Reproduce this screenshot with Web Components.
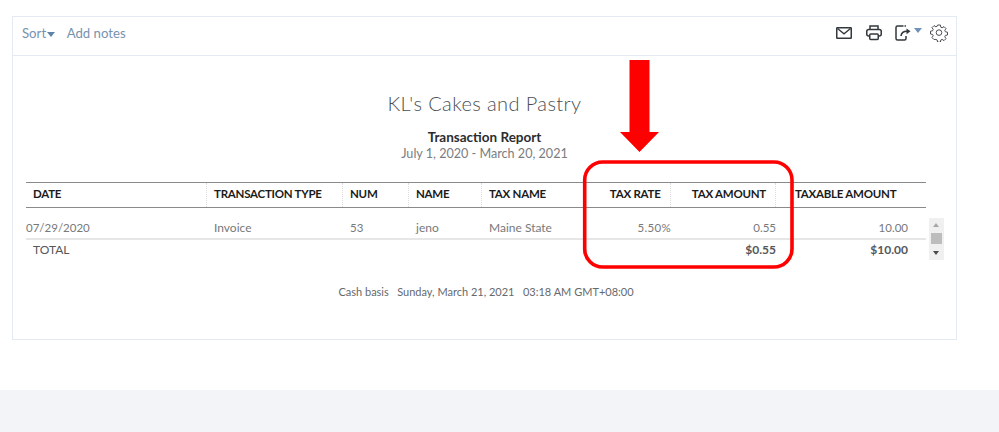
<!DOCTYPE html>
<html>
<head>
<meta charset="utf-8">
<title>Transaction Report</title>
<style>
  html, body { margin: 0; padding: 0; background: #fff; }
  body { width: 999px; height: 432px; overflow: hidden; font-family: Lato, "Open Sans", sans-serif; position: relative; }
</style>
</head>
<body>
<report-page>
  <report-panel>
    <report-toolbar slot="toolbar"></report-toolbar>
    <report-header company="KL's Cakes and Pastry" title="Transaction Report" range="July 1, 2020 - March 20, 2021"></report-header>
    <report-table></report-table>
    <report-footer>Cash basis&nbsp;&nbsp;&nbsp;Sunday, March 21, 2021&nbsp;&nbsp;&nbsp;03:18 AM GMT+08:00</report-footer>
  </report-panel>
</report-page>
<red-callout></red-callout>

<script>
class ReportPage extends HTMLElement {
  connectedCallback() {
    this.attachShadow({ mode: 'open' });
    this.shadowRoot.innerHTML = `
      <style>
        :host { display: flex; flex-direction: column; height: 432px; }
        .top { flex: none; height: 390px; padding: 16px 0 0 12px; box-sizing: border-box; }
        .band { flex: 1; background: #f3f4f8; }
      </style>
      <div class="top"><slot></slot></div>
      <div class="band"></div>`;
  }
}

class ReportPanel extends HTMLElement {
  connectedCallback() {
    this.attachShadow({ mode: 'open' });
    this.shadowRoot.innerHTML = `
      <style>
        :host { display: block; width: 945px; height: 324px; box-sizing: border-box; border: 1px solid #e4eaf4; }
        .body { padding: 0 13px; }
      </style>
      <slot name="toolbar"></slot>
      <div class="body"><slot></slot></div>`;
  }
}

class ReportToolbar extends HTMLElement {
  connectedCallback() {
    this.attachShadow({ mode: 'open' });
    this.shadowRoot.innerHTML = `
      <style>
        :host { display: flex; align-items: center; justify-content: space-between; height: 39px; box-sizing: border-box; border-bottom: 1px solid #e4eaf4; padding: 0 8px 6px 9px; font-size: 13.2px; color: #7792ae; }
        .left { display: flex; align-items: center; }
        .caret { width: 0; height: 0; border-left: 4px solid transparent; border-right: 4px solid transparent; border-top: 5px solid #5f83a8; margin: 2px 11.5px 0 1px; }
        .right { display: flex; align-items: center; }
        svg { display: block; fill: none; stroke: #33383d; stroke-width: 1.5; }
        .mail { margin-right: 14px; }
        .print { margin-right: 13px; }
        .caret2 { width: 0; height: 0; border-left: 4px solid transparent; border-right: 4px solid transparent; border-top: 5px solid #6f93b8; margin: -5px 8px 0 2px; }
      </style>
      <div class="left"><span>Sort</span><i class="caret"></i><span>Add notes</span></div>
      <div class="right">
        <svg class="mail" width="16" height="12" viewBox="0 0 16 12"><rect x=".75" y=".75" width="14.5" height="10.5" rx=".5"/><path d="M1.5 1.5 8 6.8l6.500-5.300" stroke-width="1.300"/></svg>
        <svg class="print" width="16" height="16" viewBox="0 0 16 16"><path d="M4 4.500V1h8v3.500"/><rect x=".75" y="4.500" width="14.500" height="6.500" rx="2"/><rect x="3.750" y="9" width="8.500" height="5.500" rx="1" fill="#fff"/></svg>
        <svg width="17" height="16" viewBox="0 0 17 16"><path d="M8.500 1H2.500A1.500 1.500 0 0 0 1 2.500v11A1.500 1.500 0 0 0 2.500 15h7A1.500 1.500 0 0 0 11 13.500V11"/><path d="M11 1H9.500" /><path d="M6 11c.4-3 2.500-4.800 6-4.800" stroke-width="1.600"/><path d="M11.500 3.500 15.500 6.300 11.500 9.200z" fill="#33383d" stroke="none"/></svg>
        <i class="caret2"></i>
        <svg width="18" height="18" viewBox="0 0 18 18" style="stroke:#4a4f54;stroke-width:1"><path d="M7.600 1h2.800l.4 2.200 1.300.6 1.900-1.200 2 2-1.200 1.800.6 1.400 2.100.4v2.800l-2.100.4-.6 1.400 1.200 1.800-2 2-1.900-1.200-1.300.6-.4 2.200H7.600l-.4-2.200-1.300-.6L4 15.600l-2-2 1.200-1.800-.6-1.400L.5 10V7.200l2.100-.4.600-1.400L2 3.600l2-2 1.900 1.200 1.300-.6z"/><circle cx="9" cy="8.600" r="2.800"/></svg>
      </div>`;
  }
}

class ReportHeader extends HTMLElement {
  connectedCallback() {
    this.attachShadow({ mode: 'open' });
    this.shadowRoot.innerHTML = `
      <style>
        :host { display: block; text-align: center; padding-top: 34px; height: 92px; box-sizing: content-box; }
        .co { font-size: 20px; line-height: 26px; font-weight: 300; color: #4a4f54; letter-spacing: .4px; }
        .ti { font-size: 13.5px; line-height: 16px; font-weight: 700; color: #2a2d30; margin-top: 13px; }
        .ra { font-size: 12.6px; line-height: 16px; color: #7a7d80; margin-top: 1px; }
      </style>
      <div class="co">${this.getAttribute('company')}</div>
      <div class="ti">${this.getAttribute('title')}</div>
      <div class="ra">${this.getAttribute('range')}</div>`;
  }
}

class ReportTable extends HTMLElement {
  connectedCallback() {
    this.attachShadow({ mode: 'open' });
    this.shadowRoot.innerHTML = `
      <style>
        :host { display: block; width: 900px; position: relative; font-size: 12px; }
        .row { display: grid; grid-template-columns: 181px 136px 66px 73px 103px 86px 105px 150px; }
        .head { height: 26px; box-sizing: border-box; border-top: 1px solid #8a8a8a; border-bottom: 1px solid #8a8a8a; font-weight: 700; font-size: 11.5px; color: #1b1b1b; align-items: center; line-height: 21px; letter-spacing: -.25px; }
        .head > div { padding-left: 7px; height: 24px; border-right: 1px dotted #dcdcdc; box-sizing: border-box; }
        .head > div:nth-child(5), .head > div:last-child { border-right: 0; }
        .head .r { text-align: right; padding: 0 9px 0 0; }
        .head .rate { padding-right: 9.5px; }
        .head .last { padding-left: 19px; }
        .data { height: 32px; box-sizing: border-box; border-bottom: 2px solid #e6e6e6; color: #77797b; padding-top: 12px; line-height: 16px; }
        .data .p { padding-left: 7px; }
        .r { text-align: right; }
        .n { font-size: 11.5px; }
        .pct { letter-spacing: .3px; }
        .data .end, .total .end { padding-right: 18px; }
        .total { height: 21px; color: #55575a; line-height: 20px; }
        .total b { color: #55575a; font-size: 12px; }
        .total .p { padding-left: 7px; }
        .bar { position: absolute; left: 903px; top: 36px; width: 15px; height: 42px; background: #f0f0f0; }
        .up, .down { position: absolute; left: 4px; width: 0; height: 0; border-left: 3.500px solid transparent; border-right: 3.500px solid transparent; }
        .up { top: 5px; border-bottom: 4px solid #a8a8a8; }
        .down { bottom: 5px; border-top: 4px solid #4a4a4a; }
        .thumb { position: absolute; left: 2px; top: 15px; width: 11px; height: 11px; background: #bdbdbd; }
      </style>
      <div class="row head">
        <div>DATE</div><div>TRANSACTION TYPE</div><div>NUM</div><div>NAME</div><div>TAX NAME</div>
        <div class="r rate">TAX RATE</div><div class="r">TAX AMOUNT</div><div class="last">TAXABLE AMOUNT</div>
      </div>
      <div class="row data">
        <div class="n">07/29/2020</div><div class="p">Invoice</div><div class="p n">53</div><div class="p">jeno</div><div class="p">Maine State</div>
        <div class="r n pct">5.50%</div><div class="r n">0.55</div><div class="r n end">10.00</div>
      </div>
      <div class="row total">
        <div class="p">TOTAL</div><div></div><div></div><div></div><div></div>
        <div></div><div class="r"><b>$0.55</b></div><div class="r end"><b>$10.00</b></div>
      </div>
      <div class="bar"><i class="up"></i><i class="thumb"></i><i class="down"></i></div>`;
  }
}

class ReportFooter extends HTMLElement {
  connectedCallback() {
    this.attachShadow({ mode: 'open' });
    this.shadowRoot.innerHTML = `
      <style>
        :host { display: block; text-align: center; font-size: 11px; line-height: 14px; color: #66696c; padding-top: 24px; margin-right: -3px; }
      </style>
      <slot></slot>`;
  }
}

class RedCallout extends HTMLElement {
  connectedCallback() {
    this.attachShadow({ mode: 'open' });
    this.shadowRoot.innerHTML = `
      <style>
        :host { position: absolute; left: 580px; top: 56px; width: 220px; height: 216px; display: block; }
        svg { display: block; }
      </style>
      <svg width="220" height="216" viewBox="580 56 220 216">
        <path d="M629.500 60h20v72H659l-19.500 20L620 132h9.500z" fill="#f00"/>
        <rect x="584.700" y="162" width="207.300" height="105" rx="18" fill="none" stroke="#f00" stroke-width="3.600"/>
      </svg>`;
  }
}

customElements.define('report-page', ReportPage);
customElements.define('report-panel', ReportPanel);
customElements.define('report-toolbar', ReportToolbar);
customElements.define('report-header', ReportHeader);
customElements.define('report-table', ReportTable);
customElements.define('report-footer', ReportFooter);
customElements.define('red-callout', RedCallout);
</script>
</body>
</html>
